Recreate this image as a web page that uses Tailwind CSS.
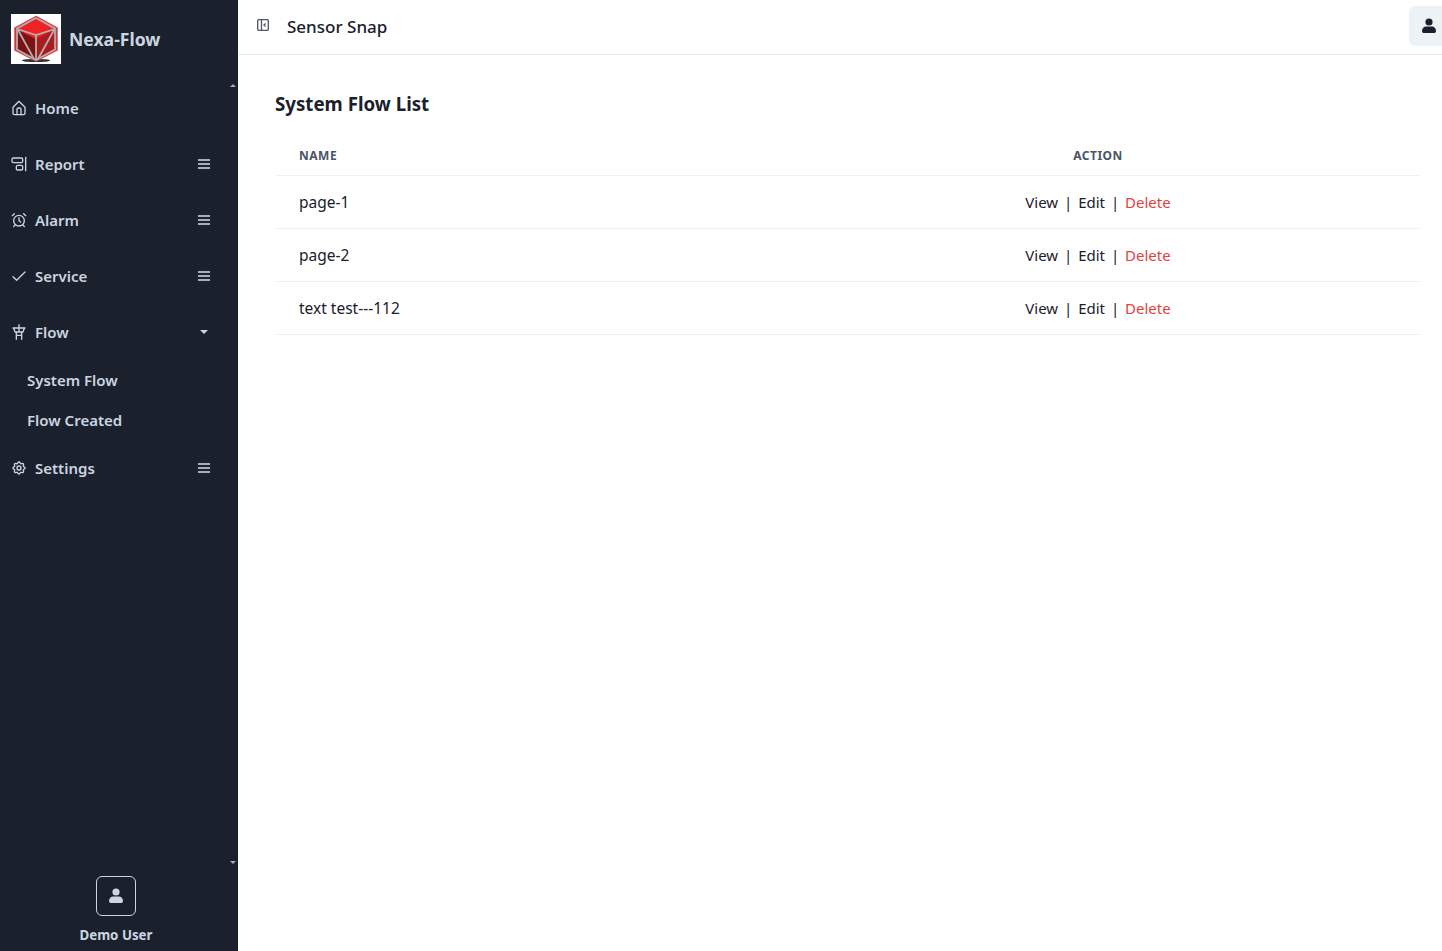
<!DOCTYPE html>
<html lang="en">
<head>
  <meta charset="UTF-8" />
  <title>Sensor Snap</title>
  <script src="https://cdn.jsdelivr.net/npm/@tailwindcss/browser@4"></script>
</head>
<body class="bg-white font-['Noto_Sans',sans-serif] overflow-hidden">
  <div class="flex h-[951px] w-[1442px]">

    <!-- Sidebar -->
    <aside class="w-[238px] shrink-0 bg-[#1a202c] flex flex-col text-[#cbd5e0] relative">
      <div class="h-[80px] flex items-center pl-[11px] pb-[3px] gap-[8px]">
        <div class="w-[50px] h-[50px] bg-white flex items-center justify-center">
          <svg width="46" height="50" viewBox="0 0 46 50">
            <ellipse cx="23" cy="46.500" rx="14" ry="1.600" fill="#333"/>
            <polygon points="23,2.500 44,14 44,36 23,47 2,36 2,14" fill="#a81c1f" stroke="#d8434a" stroke-width="1.500"/>
            <polygon points="23,4 42,15 23,25 4,15" fill="#ee2227"/>
            <polygon points="4,16 22,25 22,46 4,36" fill="#7c1212"/>
            <g fill="none" stroke="#b5aeae" stroke-width="1.800">
              <polygon points="23,4 42,14.500 42,35.500 23,46 4,35.500 4,14.500"/>
              <path d="M4 15L23 21L42 15M23 21V46M5 16L21 45M41 16L25 45"/>
            </g>
          </svg>
        </div>
        <span class="text-[17.6px] leading-[28px] font-bold text-[#cbd5e0]">Nexa-Flow</span>
      </div>

      <!-- scroll arrows -->
      <div class="absolute left-[230px] top-[84px] w-0 h-0 border-x-[3.5px] border-x-transparent border-b-[3.5px] border-b-[#a0aec0]"></div>
      <div class="absolute left-[230px] top-[861px] w-0 h-0 border-x-[3.5px] border-x-transparent border-t-[3.5px] border-t-[#a0aec0]"></div>

      <nav class="flex-1 text-[15px] font-semibold">
        <a class="h-[56px] flex items-center pl-[11px] pr-[27px]">
          <svg class="w-4 h-4 mr-2 text-[#cbd5e0]" viewBox="0 0 24 24" fill="none" stroke="currentColor" stroke-width="2" stroke-linecap="round" stroke-linejoin="round"><path d="M3 11L12 2l9 9v9a2 2 0 0 1-2 2H5a2 2 0 0 1-2-2z"/><path d="M9 22v-8a2 2 0 0 1 2-2h2a2 2 0 0 1 2 2v8"/></svg>
          <span>Home</span>
        </a>
        <a class="h-[56px] flex items-center pl-[11px] pr-[27px]">
          <svg class="w-4 h-4 mr-2 text-[#cbd5e0]" viewBox="0 0 24 24" fill="none" stroke="currentColor" stroke-width="2" stroke-linecap="round" stroke-linejoin="round"><path d="M22 2v20"/><rect x="1.500" y="3" width="16" height="7" rx="2"/><rect x="8" y="14" width="9.500" height="7" rx="2"/></svg>
          <span>Report</span>
          <svg class="w-[14px] h-[14px] ml-auto text-[#a0aec0]" viewBox="0 0 14 14" fill="currentColor"><path d="M1 2h12v2H1zM1 6h12v2H1zM1 10h12v2H1z"/></svg>
        </a>
        <a class="h-[56px] flex items-center pl-[11px] pr-[27px]">
          <svg class="w-4 h-4 mr-2 text-[#cbd5e0]" viewBox="0 0 24 24" fill="none" stroke="currentColor" stroke-width="2" stroke-linecap="round" stroke-linejoin="round"><circle cx="12" cy="13" r="8"/><path d="M12 8.500V13l2.500 2M5 2.500L2 5.500M22 5.500l-3-3M6.400 19L4 22M17.600 19l2.400 3"/></svg>
          <span>Alarm</span>
          <svg class="w-[14px] h-[14px] ml-auto text-[#a0aec0]" viewBox="0 0 14 14" fill="currentColor"><path d="M1 2h12v2H1zM1 6h12v2H1zM1 10h12v2H1z"/></svg>
        </a>
        <a class="h-[56px] flex items-center pl-[11px] pr-[27px]">
          <svg class="w-4 h-4 mr-2 text-[#cbd5e0]" viewBox="0 0 24 24" fill="none" stroke="currentColor" stroke-width="2" stroke-linecap="round" stroke-linejoin="round"><path d="M3 13l5.500 5.500L21 6"/></svg>
          <span>Service</span>
          <svg class="w-[14px] h-[14px] ml-auto text-[#a0aec0]" viewBox="0 0 14 14" fill="currentColor"><path d="M1 2h12v2H1zM1 6h12v2H1zM1 10h12v2H1z"/></svg>
        </a>
        <a class="h-[56px] flex items-center pl-[11px] pr-[27px]">
          <svg class="w-4 h-4 mr-2 text-[#cbd5e0]" viewBox="0 0 24 24" fill="none" stroke="currentColor" stroke-width="2" stroke-linecap="round" stroke-linejoin="round"><path d="M12 1v4M3 6h18M4 6l2 6h12l2-6M8 12v11M16 12v11M12 6v6M8 17h8"/></svg>
          <span>Flow</span>
          <div class="ml-auto mr-[3px] w-0 h-0 border-x-[4px] border-x-transparent border-t-[4px] border-t-[#cbd5e0]"></div>
        </a>
        <a class="h-[40px] flex items-center pl-[27px]">System Flow</a>
        <a class="h-[40px] flex items-center pl-[27px]">Flow Created</a>
        <a class="h-[56px] flex items-center pl-[11px] pr-[27px]">
          <svg class="w-4 h-4 mr-2 text-[#cbd5e0]" viewBox="0 0 24 24" fill="none" stroke="currentColor" stroke-width="2" stroke-linecap="round" stroke-linejoin="round"><circle cx="12" cy="12" r="3"/><path d="M10.300 4.300c.4-1.800 3-1.800 3.400 0a1.700 1.700 0 0 0 2.600 1.100c1.500-.9 3.300.8 2.400 2.400a1.700 1.700 0 0 0 1 2.500c1.800.4 1.800 3 0 3.400a1.700 1.700 0 0 0-1 2.600c.9 1.500-.9 3.300-2.400 2.400a1.700 1.700 0 0 0-2.600 1c-.4 1.800-3 1.800-3.400 0a1.700 1.700 0 0 0-2.600-1c-1.500.9-3.300-.9-2.400-2.400a1.700 1.700 0 0 0-1-2.600c-1.800-.4-1.800-3 0-3.400a1.700 1.700 0 0 0 1-2.500c-.9-1.600.9-3.300 2.400-2.400 1 .6 2.300.1 2.600-1.100z"/></svg>
          <span>Settings</span>
          <svg class="w-[14px] h-[14px] ml-auto text-[#a0aec0]" viewBox="0 0 14 14" fill="currentColor"><path d="M1 2h12v2H1zM1 6h12v2H1zM1 10h12v2H1z"/></svg>
        </a>
      </nav>

      <div class="h-[75px] flex flex-col items-center pr-[6px]">
        <div class="w-[40px] h-[40px] border border-[#cbd5e0] rounded-[6px] flex items-center justify-center">
          <svg class="w-4 h-4 text-[#cbd5e0]" viewBox="0 0 16 16" fill="currentColor"><circle cx="8" cy="4" r="3.600"/><path d="M1 13c0-3 2-4.600 4-4.600h6c2 0 4 1.600 4 4.600 0 1.500-1 2-2 2H3c-1 0-2-.5-2-2z"/></svg>
        </div>
        <span class="mt-[9px] text-[13.3px] leading-[20px] font-bold">Demo User</span>
      </div>
    </aside>

    <!-- Main -->
    <main class="flex-1 min-w-0">
      <header class="h-[55px] border-b border-[#e2e8f0] flex items-center pl-[18px] pb-[1px] relative">
        <svg class="w-[14px] h-[14px] mb-[4px] text-[#4a5568]" viewBox="0 0 14 14" fill="none" stroke="currentColor" stroke-width="1.300"><rect x="1.700" y="1.700" width="10.600" height="10.600" rx="1"/><path d="M5.500 1.700v10.600"/><path d="M9.500 5.500L8 7l1.500 1.500"/></svg>
        <span class="ml-[17px] text-[17px] leading-[28px] font-medium text-[#1a202c]">Sensor Snap</span>
        <div class="ml-auto w-[33px] h-[40px] mb-[1px] bg-[#edf2f7] rounded-l-[6px] flex items-center pl-[12px]">
          <svg class="w-4 h-4 shrink-0 text-[#1a202c]" viewBox="0 0 16 16" fill="currentColor"><circle cx="8" cy="4" r="3.600"/><path d="M1 13c0-3 2-4.600 4-4.600h6c2 0 4 1.600 4 4.600 0 1.500-1 2-2 2H3c-1 0-2-.5-2-2z"/></svg>
        </div>
      </header>

      <section class="pl-[37px] pr-[22px] pt-[34px]">
        <h2 class="text-[18.7px] leading-[30px] font-bold text-[#1a202c]">System Flow List</h2>
        <table class="mt-[16px] w-full table-fixed text-[15px] text-[#1a202c]">
          <thead>
            <tr class="h-[40px] border-b border-[#edf2f7]">
              <th class="w-[501px] pl-[24px] pt-[2px] text-left text-[12px] font-bold tracking-[0.5px] text-[#4a5568]">NAME</th>
              <th class="pt-[2px] text-center text-[12px] font-bold tracking-[0.5px] text-[#4a5568]">ACTION</th>
            </tr>
          </thead>
          <tbody>
            <tr class="h-[53px] border-b border-[#edf2f7]">
              <td class="pl-[24px] pt-[2px] text-[15.5px]">page-1</td>
              <td class="pt-[2px] text-center">View <span class="mx-[2px]">|</span> Edit <span class="mx-[2px]">|</span> <span class="text-[#e53e3e]">Delete</span></td>
            </tr>
            <tr class="h-[53px] border-b border-[#edf2f7]">
              <td class="pl-[24px] pt-[2px] text-[15.5px]">page-2</td>
              <td class="pt-[2px] text-center">View <span class="mx-[2px]">|</span> Edit <span class="mx-[2px]">|</span> <span class="text-[#e53e3e]">Delete</span></td>
            </tr>
            <tr class="h-[53px] border-b border-[#edf2f7]">
              <td class="pl-[24px] pt-[2px] text-[15.5px]">text test---112</td>
              <td class="pt-[2px] text-center">View <span class="mx-[2px]">|</span> Edit <span class="mx-[2px]">|</span> <span class="text-[#e53e3e]">Delete</span></td>
            </tr>
          </tbody>
        </table>
      </section>
    </main>
  </div>
</body>
</html>
